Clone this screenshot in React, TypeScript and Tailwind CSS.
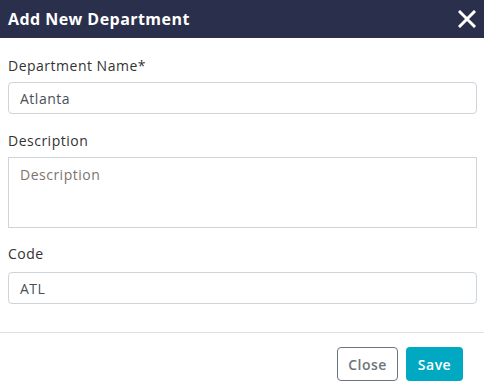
import React from 'react';

const font = { fontFamily: '"Open Sans", "Liberation Sans", sans-serif' };

const Field = ({ label, value, mt }: { label: string; value: string; mt: string }) => (
    <div className={mt}>
        <label className="block text-[14px] leading-[21px] text-[#333333] mb-[6px]">{label}</label>
        <input
            readOnly
            value={value}
            className="block w-full h-[32px] px-[11px] rounded-[4px] border border-[#ced4da] text-[14px] tracking-[0.5px] text-[#495057] outline-none"
        />
    </div>
);

const App = () => {
    return (
        <div className="w-[484px] h-[387px] bg-white flex flex-col tracking-[0.5px]" style={font}>
            <div className="h-[38px] bg-[#2a2f4b] flex items-center justify-between pl-2 pr-[8px]">
                <h2 className="text-white text-[16px] font-bold tracking-[0.45px]">Add New Department</h2>
                <svg width="18" height="18" viewBox="0 0 18 18">
                    <path d="M2 2 L16 16 M16 2 L2 16" stroke="white" strokeWidth="3" strokeLinecap="square" />
                </svg>
            </div>
            <div className="px-2 pt-[17px] pb-[28px] pr-[7px] border-b border-[#dee2e6]">
                <Field label="Department Name*" value="Atlanta" mt="" />
                <div className="mt-[16px]">
                    <label className="block text-[14px] leading-[21px] text-[#333333] mb-[6px]">Description</label>
                    <textarea
                        readOnly
                        placeholder="Description"
                        className="block w-full h-[71px] px-[11px] py-[6px] border border-[#ced4da] text-[14px] tracking-[0.5px] text-[#495057] placeholder:text-[#7d7470] resize-none outline-none"
                    />
                </div>
                <div className="mt-[15px]">
                    <label className="block text-[14px] leading-[21px] text-[#333333] mb-[8px]">Code</label>
                    <input
                        readOnly
                        value="ATL"
                        className="block w-full h-[32px] px-[11px] rounded-[4px] border border-[#ced4da] text-[14px] tracking-[0.5px] text-[#495057] outline-none"
                    />
                </div>
            </div>
            <div className="flex justify-end gap-[8px] pt-[14px] pr-[21px]">
                <button className="h-[34px] w-[61px] rounded-[4px] border border-[#6c757d] text-[14px] font-semibold tracking-[0.5px] text-[#6c757d] bg-white">
                    Close
                </button>
                <button className="h-[34px] w-[57px] rounded-[4px] bg-[#00a9c1] text-[14px] font-semibold tracking-[0.5px] text-white">
                    Save
                </button>
            </div>
        </div>
    );
};

export default App;
